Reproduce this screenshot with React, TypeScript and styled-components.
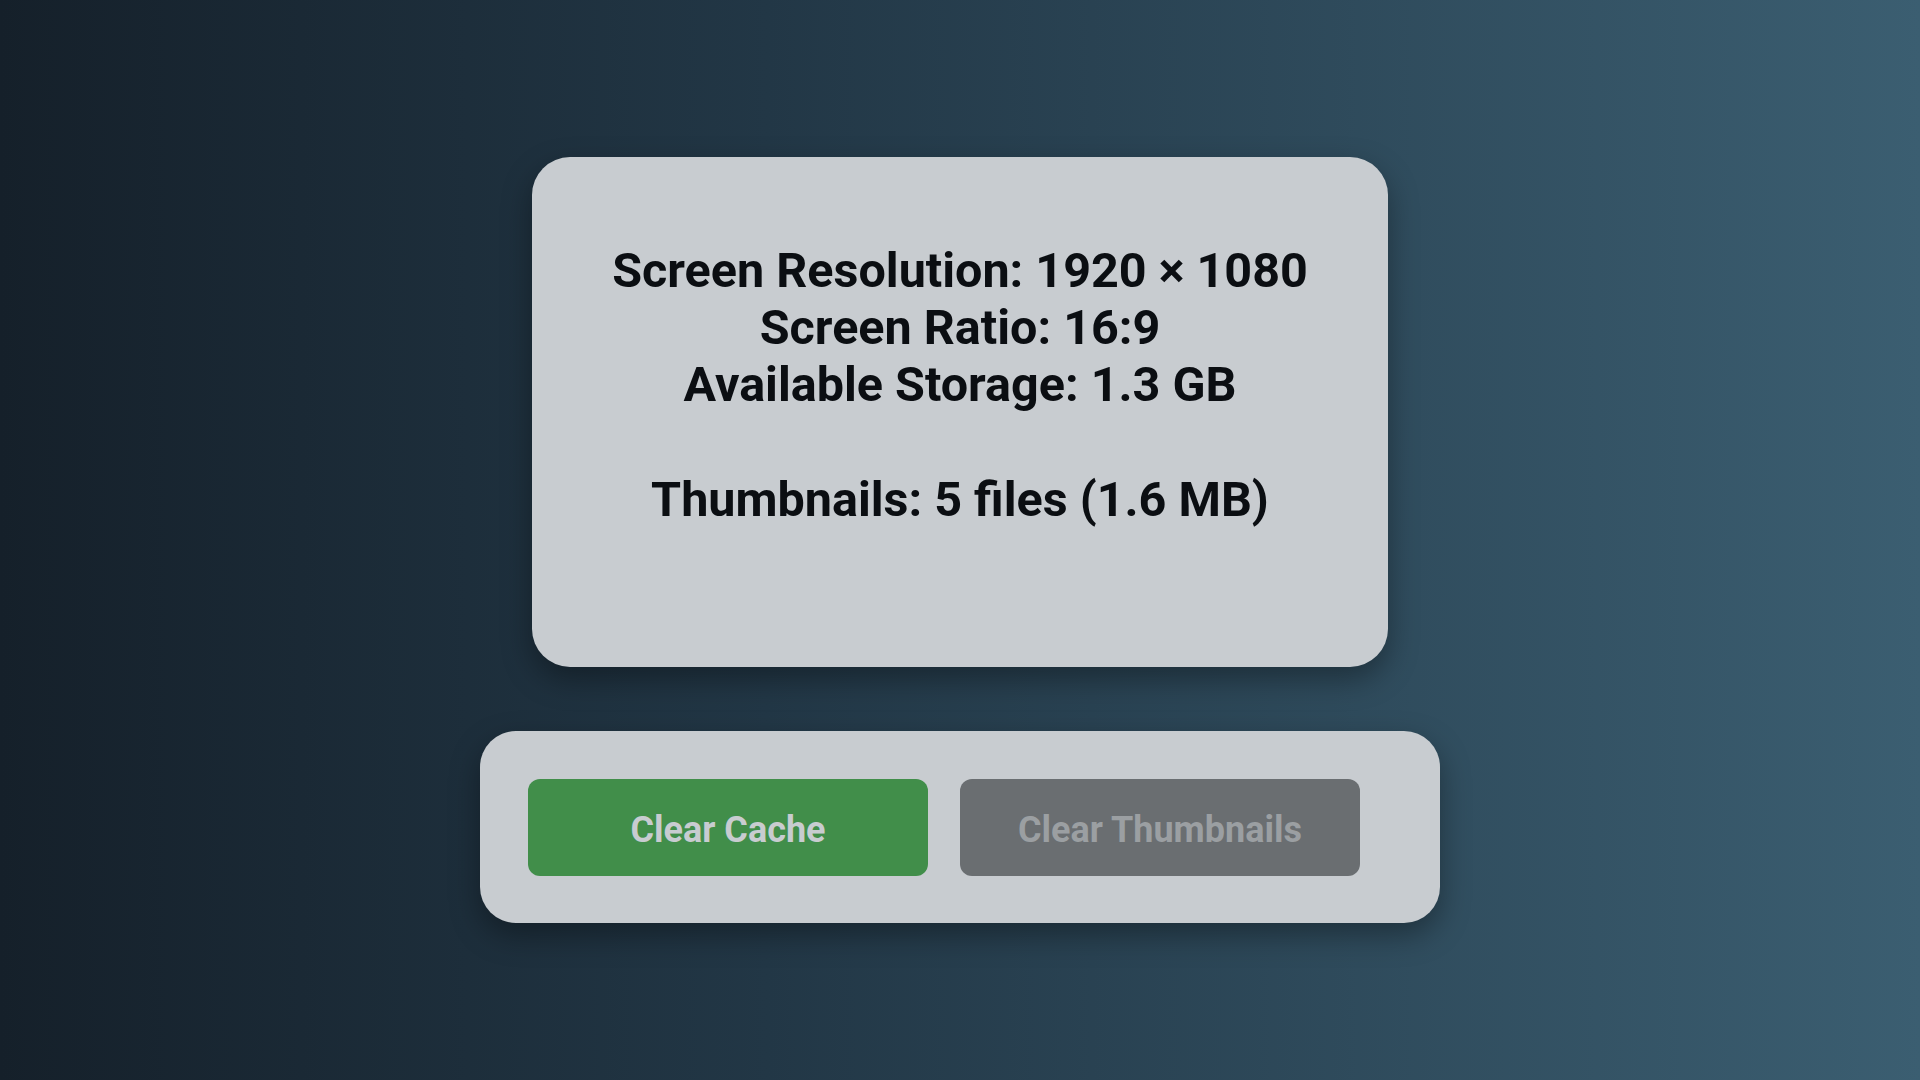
import styled, { createGlobalStyle } from 'styled-components';

const GlobalStyle = createGlobalStyle`
  html, body {
    margin: 0;
    padding: 0;
  }
  body {
    font-family: Roboto, 'Noto Sans', sans-serif;
  }
`;

const Screen = styled.div`
  width: 1920px;
  height: 1080px;
  display: flex;
  flex-direction: column;
  align-items: center;
  justify-content: center;
  gap: 64px;
  background: linear-gradient(90deg, #15202a 0%, #223746 40%, #3b5e71 100%);
  overflow: hidden;
`;

const InfoCard = styled.div`
  box-sizing: border-box;
  width: 856px;
  height: 510px;
  padding-top: 85px;
  background: #c8ccd0;
  border-radius: 38px;
  box-shadow: 0 12px 30px rgba(0, 0, 0, 0.35);
  display: flex;
  flex-direction: column;
  align-items: center;
`;

const InfoLine = styled.div<{ $gap?: boolean }>`
  font-size: 48.5px;
  line-height: 57.2px;
  font-weight: 700;
  color: #0b0e12;
  text-align: center;
  margin-top: ${(p) => (p.$gap ? '57.2px' : '0')};
`;

const ActionPanel = styled.div`
  box-sizing: border-box;
  width: 960px;
  height: 192px;
  padding: 48px;
  background: #c8ccd0;
  border-radius: 36px;
  box-shadow: 0 12px 30px rgba(0, 0, 0, 0.35);
  display: flex;
  align-items: center;
  gap: 32px;
`;

const ActionButton = styled.button<{ $variant: 'primary' | 'disabled' }>`
  width: 400px;
  height: 97px;
  padding: 5px 0 0;
  border: none;
  border-radius: 12px;
  font-family: Roboto, 'Noto Sans', sans-serif;
  font-size: 36px;
  font-weight: 700;
  background: ${(p) => (p.$variant === 'primary' ? '#418e4a' : '#6a6e71')};
  color: ${(p) => (p.$variant === 'primary' ? '#c8ccd0' : '#9b9fa2')};
  cursor: ${(p) => (p.$variant === 'primary' ? 'pointer' : 'default')};
`;

const info = {
  width: 1920,
  height: 1080,
  ratio: '16:9',
  storage: '1.3 GB',
  thumbs: 5,
  thumbSize: '1.6 MB',
};

export default function App() {
  return (
    <>
      <GlobalStyle />
      <Screen>
        <InfoCard>
          <InfoLine>
            Screen Resolution: {info.width} × {info.height}
          </InfoLine>
          <InfoLine>Screen Ratio: {info.ratio}</InfoLine>
          <InfoLine>Available Storage: {info.storage}</InfoLine>
          <InfoLine $gap>
            Thumbnails: {info.thumbs} files ({info.thumbSize})
          </InfoLine>
        </InfoCard>
        <ActionPanel>
          <ActionButton $variant="primary">Clear Cache</ActionButton>
          <ActionButton $variant="disabled" disabled>
            Clear Thumbnails
          </ActionButton>
        </ActionPanel>
      </Screen>
    </>
  );
}
